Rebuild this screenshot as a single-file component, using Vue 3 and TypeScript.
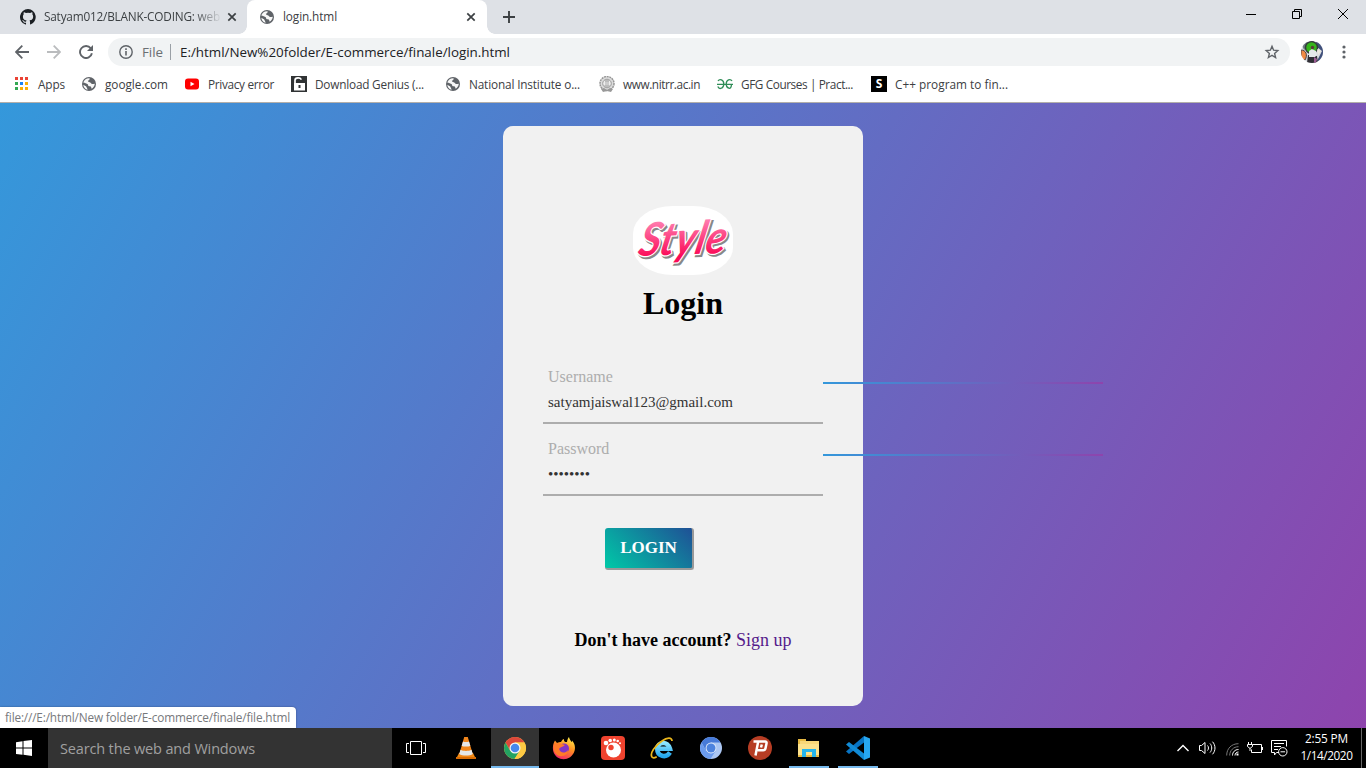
<script setup lang="ts">
interface Bookmark {
  icon: string
  label: string
  slot: number
  text: number
}

const bookmarks: Bookmark[] = [
  { icon: 'apps', label: 'Apps', slot: 67, text: 27 },
  { icon: 'globe', label: 'google.com', slot: 103, text: 63 },
  { icon: 'youtube', label: 'Privacy error', slot: 107, text: 66 },
  { icon: 'lock', label: 'Download Genius (...', slot: 154, text: 109 },
  { icon: 'globe', label: 'National Institute o...', slot: 154, text: 111 },
  { icon: 'seal', label: 'www.nitrr.ac.in', slot: 118, text: 77 },
  { icon: 'gfg', label: 'GFG Courses | Pract...', slot: 154, text: 112 },
  { icon: 'letter', label: 'C++ program to fin...', slot: 150, text: 113 },
]

const apps = [
  { name: 'vlc', state: '' },
  { name: 'chrome', state: 'active running' },
  { name: 'firefox', state: '' },
  { name: 'gom', state: '' },
  { name: 'ie', state: '' },
  { name: 'chromium', state: '' },
  { name: 'psiphon', state: '' },
  { name: 'folder', state: 'running' },
  { name: 'code', state: 'running' },
]

// Tracks a label so that it occupies exactly the given width.
const vFit = {
  mounted(el: HTMLElement, binding: { value: number }) {
    const count = (el.textContent ?? '').trim().length
    const spacing = (binding.value - el.getBoundingClientRect().width) / count
    el.style.letterSpacing = `${spacing.toFixed(3)}px`
  },
}
</script>

<template>
  <div class="screen">
    <svg class="defs" aria-hidden="true">
      <defs>
        <linearGradient id="pink" x1="0" y1="0" x2="0" y2="1">
          <stop offset="0.2" stop-color="#ff7fb0" />
          <stop offset="0.85" stop-color="#fb0a57" />
        </linearGradient>
        <linearGradient id="fox" x1="0.8" y1="0" x2="0.3" y2="1">
          <stop offset="0" stop-color="#fff04a" />
          <stop offset="0.45" stop-color="#ff8f22" />
          <stop offset="1" stop-color="#f3246a" />
        </linearGradient>
        <linearGradient id="iefill" x1="0" y1="0" x2="0" y2="1">
          <stop offset="0" stop-color="#8ee6ff" />
          <stop offset="1" stop-color="#26a8ee" />
        </linearGradient>
      </defs>
      <symbol id="globe" viewBox="0 0 16 16">
        <circle cx="8" cy="8" r="7" fill="#5f6368" />
        <path d="M8.6 2.2C8.9 4 7.7 4.2 6.8 4.7 7 6 8.5 5.8 9.6 6.7c.6 1 1.2 1.3 2.8 1.2l1.4-.2c-.2 2.1-1.2 3.9-3.1 5-.6-1.2-.2-2.1-1.5-2.5-1.8.1-2.3-.7-2.2-1.8C5.700 7.500 3.600 6.700 2.300 6.500 2.900 4 5.300 2 8.600 2.200z" fill="#fff" opacity=".95" />
        <path d="M2.300 8.700 5.200 10.500 6.700 13.700C4.200 13.300 2.500 11.400 2.300 8.700z" fill="#fff" />
      </symbol>
      <symbol id="cross" viewBox="0 0 10 10">
        <path d="M1.300 1.300 8.700 8.700M8.700 1.300 1.300 8.700" stroke="#3c4043" stroke-width="1.700" />
      </symbol>
    </svg>

    <header class="browser">
      <div class="tabs">
        <div class="tab first">
          <svg class="i16" viewBox="0 0 16 16"><path fill="#1b1f23" d="M8 0a8 8 0 0 0-2.530 15.590c.4.070.550-.170.550-.380v-1.490C3.800 14.200 3.330 12.650 3.330 12.650c-.360-.920-.890-1.170-.890-1.170-.730-.5.060-.490.060-.490.800.060 1.230.830 1.230.830.710 1.220 1.870.870 2.330.660.070-.520.280-.870.510-1.070-1.780-.2-3.640-.890-3.640-3.950 0-.870.310-1.590.820-2.150-.080-.2-.360-1.020.080-2.120 0 0 .670-.220 2.200.820a7.600 7.600 0 0 1 4 0c1.530-1.040 2.200-.820 2.200-.820.440 1.100.160 1.920.080 2.120.510.560.820 1.270.820 2.150 0 3.070-1.870 3.750-3.650 3.950.290.250.540.730.540 1.480v2.200c0 .210.150.460.550.380A8 8 0 0 0 8 0z" /></svg>
          <span class="tab-text faded"><span v-fit="176">Satyam012/BLANK-CODING: web</span></span>
          <svg class="x"><use href="#cross" /></svg>
        </div>
        <div class="tab current">
          <svg class="i16"><use href="#globe" /></svg>
          <span class="tab-text"><span v-fit="54">login.html</span></span>
          <svg class="x"><use href="#cross" /></svg>
        </div>
        <svg class="plus" viewBox="0 0 12 12"><path d="M6 0v12M0 6h12" stroke="#3c4043" stroke-width="1.900" /></svg>
        <div class="controls">
          <svg width="10" height="12" viewBox="0 0 10 12"><path d="M0 6.500h10" stroke="#000" /></svg>
          <svg width="10" height="10" viewBox="0 0 10 10"><path d="M.5 2.500h7v7h-7zM2.500 2.500v-2h7v7h-2" fill="none" stroke="#000" /></svg>
          <svg width="10" height="10" viewBox="0 0 10 10"><path d="m0 0 10 10M10 0 0 10" stroke="#000" /></svg>
        </div>
      </div>

      <div class="toolbar">
        <svg class="back" viewBox="0 0 14 14"><path d="M14 7H1.500M7.300.7 1 7l6.300 6.300" fill="none" stroke="#5f6368" stroke-width="1.800" /></svg>
        <svg class="forward" viewBox="0 0 14 14"><path d="M0 7h12.500M6.700.7 13 7l-6.300 6.300" fill="none" stroke="#babcbe" stroke-width="1.800" /></svg>
        <svg class="reload" viewBox="0 0 14 14"><path d="M11.800 3.400A6 6 0 1 0 12.900 8.300" fill="none" stroke="#5f6368" stroke-width="1.900" /><path d="M14 0v6H8z" fill="#5f6368" /></svg>
        <div class="address">
          <svg width="14" height="14" viewBox="0 0 14 14"><circle cx="7" cy="7" r="6.200" fill="none" stroke="#5f6368" stroke-width="1.400" /><path d="M7 3.200v1.700M7 6v4.600" stroke="#5f6368" stroke-width="1.600" /></svg>
          <span class="scheme"><span v-fit="21">File</span></span>
          <span class="bar"></span>
          <span class="url"><span v-fit="330">E:/html/New%20folder/E-commerce/finale/login.html</span></span>
          <svg class="star" viewBox="0 0 16 16"><path d="m8 2.300 1.600 3.900 4.200.4-3.200 2.800 1 4.100L8 11.300l-3.600 2.200 1-4.100-3.200-2.800 4.200-.4z" fill="none" stroke="#5f6368" stroke-width="1.400" /></svg>
        </div>
        <svg class="avatar" viewBox="0 0 22 22">
          <clipPath id="round"><circle cx="11" cy="11" r="11" /></clipPath>
          <g clip-path="url(#round)">
            <path fill="#d9dce0" d="M0 0h22v22H0z" />
            <path d="m1 4 5-4 1 6-4 3z" fill="#6d7a80" />
            <path d="m15 1 7 1v18h-6l5-10-5-4z" fill="#40507b" />
            <circle cx="10.500" cy="6.500" r="6" fill="#35b51b" stroke="#333b3b" stroke-width="1.500" />
            <path d="M0 9c5 0 7 5 4 10H0z" fill="#f28b45" stroke="#494144" />
            <path d="m16 8 4 2-3 4z" fill="#eee9df" />
            <path d="m7 14 9 1 1 7H6z" fill="#302f36" />
            <path d="m13 16 3 2-1 4h-2z" fill="#9b5c93" />
            <path d="m8 10 3-2 4 2 1 4-2 2H8z" fill="#e4e8ea" />
            <circle cx="11.500" cy="6.500" r="1.700" fill="#583b36" />
          </g>
        </svg>
        <svg class="more" viewBox="0 0 4 14" fill="#5f6368"><circle cx="2" cy="2" r="1.600" /><circle cx="2" cy="7" r="1.600" /><circle cx="2" cy="12" r="1.600" /></svg>
      </div>

      <nav class="bookmarks">
        <div v-for="b in bookmarks" :key="b.label" class="bookmark" :style="{ width: b.slot + 'px' }">
          <svg v-if="b.icon === 'apps'" class="i16" viewBox="0 0 16 16">
            <path fill="#ea4335" d="M1 1h3v3H1zM6 1h3v3H6zM11 1h3v3h-3z" /><path fill="#34a853" d="M1 6h3v3H1zM1 11h3v3H1z" /><path fill="#1a83f5" d="M6 6h3v3H6z" /><path fill="#fbaf05" d="M11 6h3v3h-3zM6 11h3v3H6zM11 11h3v3h-3z" />
          </svg>
          <svg v-else-if="b.icon === 'globe'" class="i16"><use href="#globe" /></svg>
          <svg v-else-if="b.icon === 'youtube'" class="i16" viewBox="0 0 16 16"><rect x="1" y="2.500" width="14" height="11" rx="3" fill="#f00" /><path d="m6.500 5.800 4 2.200-4 2.200z" fill="#fff" /></svg>
          <svg v-else-if="b.icon === 'lock'" class="i16" viewBox="0 0 16 16"><path fill="#303334" d="M0 0h16v16H0z" /><path d="M4 8V4.200C4 1.200 10 1.200 10 3.700" fill="none" stroke="#fff" stroke-width="1.700" /><path fill="#fff" d="M3 7h11v7.500H3z" /><path d="M7.500 9h2v3h-2z" fill="#303334" /></svg>
          <svg v-else-if="b.icon === 'seal'" class="i16" viewBox="0 0 16 16"><circle cx="8" cy="7.500" r="7" fill="#ddd" stroke="#969696" stroke-width="1.500" stroke-dasharray="2 .7" /><circle cx="8" cy="7.500" r="4.300" fill="#eee" stroke="#999" /><path d="M6 5h4M7 4v7M9 4v7M5 10h6" stroke="#aaa" /><path d="m2 13 3-1 3 2 3-2 3 1-2 3-4-1-4 1z" fill="#999" /></svg>
          <svg v-else-if="b.icon === 'gfg'" class="i16" viewBox="0 0 16 16"><path d="M1 5C2.500 2.500 6.800 3.500 6.800 8S2.200 14 .8 10.500M15 5C13.500 2.500 9.200 3.500 9.200 8s5.200 6.500 5.200.8M0 8.300h16" fill="none" stroke="#2f8d57" stroke-width="1.300" /></svg>
          <svg v-else class="i16" viewBox="0 0 16 16"><path d="M0 0h16v16H0z" /><text x="8" y="12.200" text-anchor="middle" class="s-mark">S</text></svg>
          <span class="bm-text"><span v-fit="b.text">{{ b.label }}</span></span>
        </div>
      </nav>
    </header>

    <main class="page">
      <form class="card" @submit.prevent>
        <svg class="logo" viewBox="0 0 100 69">
          <rect width="100" height="69" rx="40" ry="27.600" fill="#fff" />
          <g transform="translate(4 50) rotate(-2) skewX(-14)" class="script">
            <text x="2" y="2" textLength="87" lengthAdjust="spacingAndGlyphs" class="shade">Style</text>
            <text x="0" y="0" textLength="87" lengthAdjust="spacingAndGlyphs" class="halo">Style</text>
            <text x="0" y="0" textLength="87" lengthAdjust="spacingAndGlyphs" fill="url(#pink)">Style</text>
          </g>
        </svg>
        <h1>Login</h1>
        <div class="field">
          <label>Username</label>
          <div class="value"><span v-fit="185">satyamjaiswal123@gmail.com</span></div>
          <i class="trail"></i>
        </div>
        <div class="field">
          <label>Password</label>
          <div class="value"><span v-fit="42">••••••••</span></div>
          <i class="trail"></i>
        </div>
        <button class="submit">LOGIN</button>
        <p class="signup"><b>Don't have account?</b> <a>Sign up</a></p>
      </form>
      <div class="status"><span v-fit="285">file:///E:/html/New folder/E-commerce/finale/file.html</span></div>
    </main>

    <footer class="taskbar">
      <div class="start">
        <svg width="16" height="16" viewBox="0 0 16 16" fill="#fff"><path d="M0 2.200 6.500 1.300v6.200H0zM7.500 1.100 16 0v7.500H7.500zM0 8.500h6.500v6.300L0 13.900zM7.500 8.500H16V16l-8.500-1.200z" /></svg>
      </div>
      <div class="search"><span v-fit="195">Search the web and Windows</span></div>
      <div class="view">
        <svg width="20" height="14" viewBox="0 0 20 14" fill="none" stroke="#fff"><path d="M4.500.5h11v13h-11zM3 2.500H.5v9H3M17 2.500h2.500v9H17" /></svg>
      </div>
      <div v-for="a in apps" :key="a.name" class="app" :class="a.state">
        <svg v-if="a.name === 'vlc'" viewBox="0 0 24 24"><path d="M5 17h14l3 6H2z" fill="#f08a12" /><path d="M2 21h20v2H2z" fill="#d86c05" /><path d="M10.200 1h3.600L19 19c-2 2-12 2-14 0z" fill="#f1861c" /><path d="m9 5.500-1.300 4.200c2 1.200 6.600 1.200 8.600 0L15 5.500c-1.500.8-4.500.8-6 0zM6.500 13.700 5.200 18c3 2 10.600 2 13.600 0l-1.300-4.300c-2.500 1.600-8.500 1.600-11 0z" fill="#e5e7e8" /></svg>
        <svg v-else-if="a.name === 'chrome'" viewBox="0 0 24 24"><circle cx="12" cy="12" r="11" fill="#fdc943" /><path d="M2.500 6.500A11 11 0 0 1 21.500 6.500H12L7.200 14.700z" fill="#dc483b" /><path d="M2.500 6.500A11 11 0 0 0 11.500 23l5.300-8.300-9.600.1z" fill="#23a362" /><path d="M21.500 6.500A11 11 0 0 1 11.500 23l5.300-8.300L12 6.500z" fill="#fdc943" /><circle cx="12" cy="12" r="5.500" fill="#f4f4f4" /><circle cx="12" cy="12" r="4.300" fill="#4687ed" /></svg>
        <svg v-else-if="a.name === 'firefox'" viewBox="0 0 24 24"><path d="M3 4.500 5 7c1.500-1 3-.9 4-1 1-2 2-3 3-3-.4 2 1 3.500 3 3 .3-2 .8-4 2-5 .2 2 1.500 3 2.500 5 .6-.5.5-1 .5-1.500 3 3 3.500 7 2.500 10.500C19 26 4 26 1.200 15 .5 11 1 7.500 3 4.500z" fill="url(#fox)" /><circle cx="12" cy="12.500" r="5" fill="#8435c4" /><path d="M2 8c4-2 8 0 11 1-2 2-5 2-6 4 1 4 6 5 9 1 0 7-11 9-14 1z" fill="#ff7b28" /></svg>
        <svg v-else-if="a.name === 'gom'" viewBox="0 0 24 24"><rect width="24" height="24" rx="4" fill="#ef432f" /><circle cx="12.500" cy="14" r="7.500" fill="#fff" /><circle cx="10" cy="11.500" r="2.700" fill="#ef432f" /><g fill="#fff"><circle cx="5" cy="7" r="2.300" /><circle cx="9.200" cy="4.500" r="1.800" /><circle cx="13.300" cy="4" r="1.500" /><circle cx="16.700" cy="5" r="1.300" /><circle cx="19" cy="7.300" r="1" /></g></svg>
        <svg v-else-if="a.name === 'ie'" viewBox="0 0 24 24"><path d="M20 16.500C16 22.500 7.300 20.500 7.300 13S18 4.500 20 12.700H8" fill="none" stroke="url(#iefill)" stroke-width="4.600" /><path d="M22 5c0-4-5-3.500-10 0C5 9.500-.5 17.500 2 21c1 1.300 3 .7 4.700-.3" fill="none" stroke="#ebb71c" stroke-width="1.800" /></svg>
        <svg v-else-if="a.name === 'chromium'" viewBox="0 0 24 24"><circle cx="12" cy="12" r="11" fill="#acc7f3" /><path d="M2.500 6.500A11 11 0 0 1 21.500 6.500H12L7 14.700z" fill="#477ad8" /><path d="M2.500 6.500A11 11 0 0 0 11.500 23l5.200-8.200-9.700-.1z" fill="#6b9bed" /><circle cx="12" cy="12" r="5.400" fill="#e5edfa" /><circle cx="12" cy="12" r="4.500" fill="#4d83de" /></svg>
        <svg v-else-if="a.name === 'psiphon'" viewBox="0 0 24 24"><circle cx="12" cy="12" r="12" fill="#b63d24" /><path d="M5.500 5.500H17q1.900 0 1.500 2l-1 4.800q-.4 1.900-2.300 1.900H9.800M10.200 5.500 7.500 19.500M13.800 8.500l-.8 3" fill="none" stroke="#fff" stroke-width="2.500" /></svg>
        <svg v-else-if="a.name === 'folder'" viewBox="0 0 24 24"><path d="M1 3h8v3h13v15H1z" fill="#e7b943" /><path d="M3 5h19v14H3z" fill="#f9d778" /><path d="M1 8h21v11H1z" fill="#fce18c" /><path d="M5 13h14v8h-4v-5H9v5H5z" fill="#25b4eb" /></svg>
        <svg v-else viewBox="0 0 24 24"><path d="M18 0v6.500L3 18l-3-2.500z" fill="#0874c4" /><path d="m0 8.500 3-2.500 15 11.500V24z" fill="#118bd6" /><path d="m18 0 6 2.500v19L18 24z" fill="#27a7f1" /></svg>
      </div>
      <div class="tray">
        <svg width="12" height="8" viewBox="0 0 12 8"><path d="m.5 7 5.500-5.500L11.500 7" fill="none" stroke="#fff" stroke-width="1.400" /></svg>
        <svg class="speaker" width="17" height="14" viewBox="0 0 17 14" fill="none" stroke="#fff"><path d="M.5 4.500h2L6 1.500v11l-3.500-3h-2zM8.500 4.500c1.300 1.200 1.300 3.800 0 5M11 2.500c2.300 2.500 2.300 6.500 0 9M13.500.7c3.300 3.500 3.300 9.100 0 12.600" /></svg>
        <svg class="wifi" width="13" height="13" viewBox="0 0 13 13" fill="none"><path d="M.7 12.500C.7 5.500 5.500.7 12.500.7M3.700 12.500c0-5 3.800-8.800 8.800-8.800" stroke="#777" /><path d="M6.500 12.500c0-3.500 2.500-6 6-6M9 12.500c0-2 1.500-3.500 3.500-3.500" stroke="#fff" /><path d="M10.500 10.500h2v2h-2z" fill="#fff" /></svg>
        <svg class="battery" width="16" height="12" viewBox="0 0 16 12" fill="none" stroke="#fff"><path d="M5.500 2.500h9v8h-10v-3M15.500 5v3M1.500 0v2M4.500 0v2M.5 2.500h5v2l-2 1.500h-1l-2-1.500zM3 6v3" /></svg>
        <svg class="note" width="17" height="17" viewBox="0 0 17 17" fill="none" stroke="#fff"><path d="M8 12.500H5.500L3.500 15v-2.500h-3V.5h15v6M3 3.500h10M3 6.500h7M3 9.500h4" /><circle cx="11.800" cy="11.800" r="4.200" /><path d="M9.500 11.800h4.600" /></svg>
        <div class="clock"><span v-fit="43">2:55 PM</span><span v-fit="52">1/14/2020</span></div>
        <i class="peek"></i>
      </div>
    </footer>
  </div>
</template>

<style>
body {
  margin: 0;
  overflow: hidden;
}
</style>

<style scoped>
.screen {
  width: 1366px;
  height: 768px;
  display: flex;
  flex-direction: column;
  overflow: hidden;
  font-family: "Open Sans", "Noto Sans", sans-serif;
  font-size: 11.800px;
  color: #3c4043;
  white-space: nowrap;
}
.screen * { box-sizing: border-box; }
span { display: inline-block; }
svg { display: block; flex: none; }
.defs { width: 0; height: 0; position: absolute; }
.i16 { width: 16px; height: 16px; }
.browser { height: 103px; flex: none; background: #fff; border-bottom: 1px solid #b3afaa; }
.tabs { height: 34px; background: #dee1e6; display: flex; align-items: center; }
.tab { height: 34px; display: flex; align-items: center; flex: none; }
.first { width: 247px; padding-left: 20px; border-bottom-right-radius: 8px; }
.current { width: 240px; padding-left: 12px; background: #fff; border-radius: 8px 8px 0 0; position: relative; }
.current::before, .current::after {
  content: ""; position: absolute; bottom: 0; width: 8px; height: 8px;
}
.current::before { left: -8px; background: radial-gradient(circle at 0 0, transparent 7.500px, #fff 8px); }
.current::after { right: -8px; background: radial-gradient(circle at 100% 0, transparent 7.500px, #fff 8px); }
.tab-text { width: 176px; margin-left: 8px; padding-bottom: 2px; overflow: hidden; }
.faded { -webkit-mask-image: linear-gradient(90deg, #000 150px, transparent 178px); mask-image: linear-gradient(90deg, #000 150px, transparent 178px); }
.x { width: 10px; height: 10px; margin-left: 7px; }
.plus { width: 12px; height: 12px; margin-left: 16px; }
.controls { display: flex; gap: 36px; align-items: center; margin-left: auto; padding-right: 18px; margin-top: -6px; }
.toolbar { height: 36px; display: flex; align-items: center; padding-left: 15px; }
.back, .forward, .reload { width: 14px; height: 14px; margin-right: 18px; }
.reload { margin-right: 15px; }
.address { width: 1182px; height: 28px; border-radius: 14px; background: #f1f3f4; display: flex; align-items: center; padding-left: 11px; font-size: 13.400px; }
.scheme { margin-left: 9px; width: 21px; color: #6b6f73; }
.bar { width: 1px; height: 16px; background: #9aa0a6; margin: 0 9px 0 7px; }
.url { color: #202124; }
.star { width: 16px; height: 16px; margin-left: auto; margin-right: 10px; }
.avatar { width: 22px; height: 22px; margin-left: 11px; }
.more { width: 4px; height: 14px; margin-left: 19px; }
.bookmarks { height: 28px; display: flex; align-items: center; padding-left: 14px; }
.bookmark { display: flex; align-items: center; gap: 8px; flex: none; }
.bm-text { padding-bottom: 1px; }
.s-mark { font: bold 12px "Open Sans", sans-serif; fill: #fff; }

.page { height: 625px; flex: none; position: relative; background: linear-gradient(120deg, #3498db, #8e44ad); padding-top: 23px; }
.card {
  width: 360px; height: 580px; margin: 0 auto; padding: 80px 40px 0; border-radius: 10px; background: #f1f1f1;
  display: flex; flex-direction: column; font-family: "Liberation Serif", serif; color: #000;
}
.logo { width: 100px; height: 69px; align-self: center; overflow: visible; }
.script { font: italic bold 46px Lato, sans-serif; }
.shade { fill: #777; stroke: #888; stroke-width: 2.500; }
.halo { fill: #fff; stroke: #fff; stroke-width: 2.500; }
h1 { margin: 9px 0 0; font-size: 32px; line-height: 38px; text-align: center; }
.field { position: relative; height: 64px; border-bottom: 2px solid #adadad; padding: 7px 5px 0; margin-bottom: 8px; }
h1 + .field { margin-top: 38px; }
.field label { display: block; height: 20px; line-height: 20px; font-size: 16px; color: #adadad; }
.value { height: 30px; line-height: 30px; font-size: 15px; color: #333; }
.trail { position: absolute; left: 280px; top: 22px; width: 280px; height: 2px; background: linear-gradient(120deg, #3498db, #8e44ad); }
.submit {
  margin: 24px 0 0 62px; width: 89px; height: 42px; padding: 0 0 1px; border: 0 solid #999; border-width: 0 2px 2px 0; border-radius: 3px;
  background: linear-gradient(45deg, #00c9a7, #1f5096); color: #fff; font: bold 17px "Liberation Serif", serif;
}
.signup { margin: 60px 0 0; text-align: center; font-size: 18px; line-height: 21px; }
.signup a { color: #551a8b; }
.status { position: absolute; left: 0; bottom: 0; width: 296px; height: 21px; padding-left: 5px; line-height: 21px; background: #fff; border-radius: 0 4px 0 0; color: #77797c; box-shadow: 0 0 2px rgba(0, 0, 0, .4); }

.taskbar { height: 40px; flex: none; background: #000; display: flex; align-items: stretch; color: #fff; }
.start { width: 48px; display: grid; place-items: center; }
.search { width: 344px; padding-left: 12px; background: #333; color: #a0a0a0; font-size: 14.500px; line-height: 41px; }
.view { width: 50px; padding-right: 2px; display: grid; place-items: center; }
.app { width: 48px; margin-right: 1px; display: grid; place-items: center; position: relative; }
.app svg { width: 24px; height: 24px; }
.app.running::after { content: ""; position: absolute; left: 4px; right: 4px; bottom: 0; height: 2px; background: #76b9ed; }
.app.active { background: #333; }
.app.active::after { left: 0; right: 0; }
.tray { margin-left: auto; display: flex; align-items: center; padding-right: 4px; }
.speaker { margin-left: 10px; }
.wifi { margin-left: 10px; margin-top: 3px; }
.battery { margin-left: 8px; }
.note { margin-left: 8px; }
.clock { width: 51px; margin-left: 13px; display: flex; flex-direction: column; align-items: center; line-height: 17px; margin-top: -3px; }
.peek { width: 1px; align-self: stretch; background: #666; margin-left: 9px; }
</style>
